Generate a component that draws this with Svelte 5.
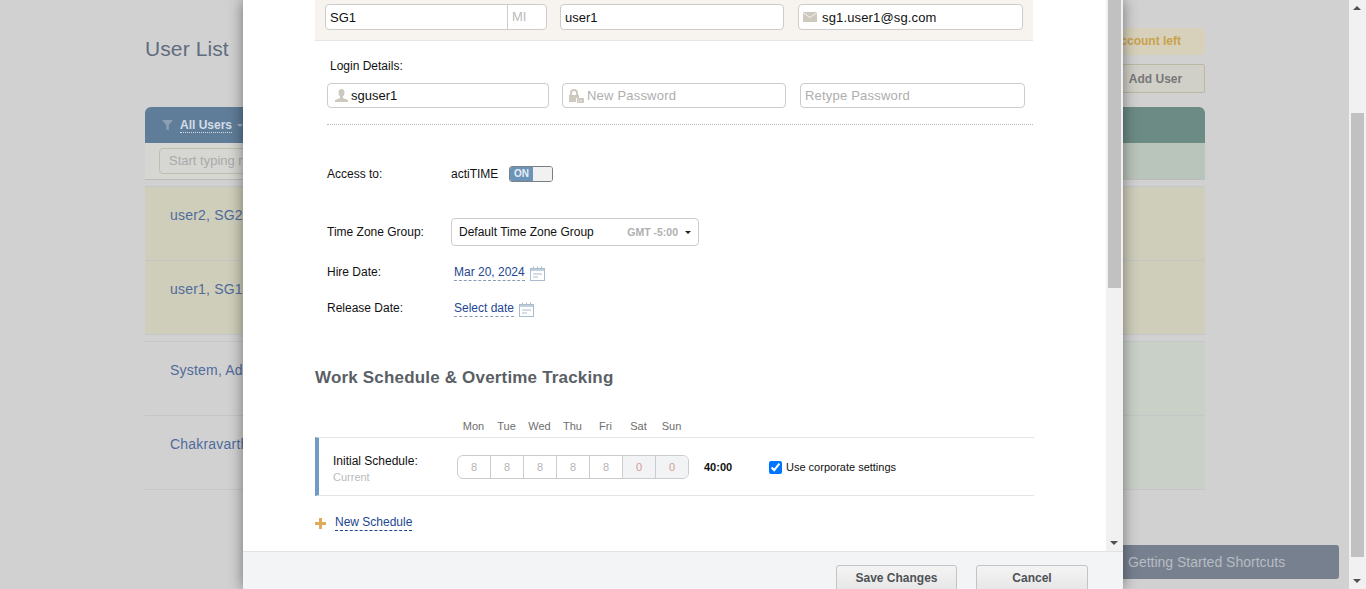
<script>
  const days = ['Mon', 'Tue', 'Wed', 'Thu', 'Fri', 'Sat', 'Sun'];
  const hours = [8, 8, 8, 8, 8, 0, 0];
  const users = [
    { name: 'user2, SG2', tone: 'new' },
    { name: 'user1, SG1', tone: 'new' },
    { name: 'System, Administrator', tone: 'old', gap: true },
    { name: 'Chakravarthi, Rao', tone: 'old' }
  ];
</script>

<div class="screen">
  <div class="page">
    <div class="title-row">
      <h1>User List</h1>
      <div class="title-actions">
        <div class="account-left">1 user account left</div>
        <button class="add-user">Add User</button>
      </div>
    </div>

    <div class="list-head">
      <svg class="funnel" width="11" height="11" viewBox="0 0 11 11"><path d="M0 0h11L6.800 5v5.500L4.200 9V5z" fill="#8d9fb1" /></svg>
      <span class="all-users">All Users</span>
      <span class="all-caret"></span>
    </div>
    <div class="list-filter">
      <div class="filter-input">Start typing name</div>
    </div>

    {#each users as user}
      <div class="user-row {user.tone}" class:gap={user.gap}>{user.name}</div>
    {/each}

    <div class="shortcuts">Getting Started Shortcuts</div>
  </div>

  <div class="page-scroll">
    <span class="arrow up"></span>
    <div class="page-thumb"></div>
    <span class="arrow down"></span>
  </div>

  <div class="modal">
    <div class="modal-main">
      <div class="modal-content">
        <div class="name-band">
          <div class="field first-name">
            <input value="SG1" />
            <span class="mi">MI</span>
          </div>
          <div class="field last-name"><input value="user1" /></div>
          <div class="field email">
            <svg width="14" height="10" viewBox="0 0 14 10"><rect width="14" height="10" fill="#cdc9bf" /><path d="M0 0.500l7 5 7-5" fill="none" stroke="#f4f3ef" /></svg>
            <input value="sg1.user1@sg.com" />
          </div>
        </div>

        <div class="login-label">Login Details:</div>
        <div class="login-row">
          <div class="field login">
            <svg width="13" height="13" viewBox="0 0 13 13"><path d="M6.500 0C8.500 0 9.500 1.500 9.500 3.500S8.600 7 8 7.500V9l5 2v2H0v-2l5-2V7.500C4.400 7 3.500 5.500 3.500 3.500S4.500 0 6.500 0z" fill="#cdc9bf" /></svg>
            <input value="sguser1" />
          </div>
          <div class="field password">
            <svg width="16" height="14" viewBox="0 0 16 14"><path d="M2 6V4a4 4 0 0 1 8 0v2h1v3H8v4H1V6zM4 6h4V4a2 2 0 0 0-4 0z" fill="#cdc9bf" /><rect x="9" y="9" width="7" height="5" rx="1" fill="#cdc9bf" /><path d="M10.500 12h1M12.500 12h1" stroke="#fff" /></svg>
            <input placeholder="New Password" />
          </div>
          <div class="field retype"><input placeholder="Retype Password" /></div>
        </div>

        <div class="access-row">
          <div class="label">Access to:</div>
          <span class="product">actiTIME</span>
          <div class="toggle"><span class="toggle-on">ON</span><span class="toggle-off"></span></div>
        </div>

        <div class="zone-row">
          <div class="label">Time Zone Group:</div>
          <div class="zone-select">
            <span class="zone-name">Default Time Zone Group</span>
            <span class="zone-gmt">GMT -5:00</span>
            <span class="zone-caret"></span>
          </div>
        </div>

        <div class="date-row hire">
          <div class="label">Hire Date:</div>
          <span class="date-link">Mar 20, 2024</span>
          {@render calendar()}
        </div>
        <div class="date-row release">
          <div class="label">Release Date:</div>
          <span class="date-link">Select date</span>
          {@render calendar()}
        </div>

        <h2>Work Schedule &amp; Overtime Tracking</h2>

        <div class="days">
          {#each days as day}
            <span>{day}</span>
          {/each}
        </div>

        <div class="schedule">
          <div class="schedule-name">
            <div>Initial Schedule:</div>
            <div class="current">Current</div>
          </div>
          <div class="hours">
            {#each hours as h}
              <span class:off={h === 0}>{h}</span>
            {/each}
          </div>
          <div class="total">40:00</div>
          <label class="corporate">
            <input type="checkbox" checked />
            Use corporate settings
          </label>
        </div>

        <div class="new-schedule">
          <svg width="11" height="11" viewBox="0 0 11 11"><path d="M4 0h3v4h4v3H7v4H4V7H0V4h4z" fill="#e0a95c" /></svg>
          <span>New Schedule</span>
        </div>
      </div>

      <div class="modal-scroll">
        <div class="modal-thumb"></div>
        <span class="arrow down"></span>
      </div>
    </div>

    <div class="modal-foot">
      <button class="foot-btn save">Save Changes</button>
      <button class="foot-btn cancel">Cancel</button>
    </div>
  </div>
</div>

{#snippet calendar()}
  <svg class="cal" width="15" height="15" viewBox="0 0 15 15">
    <rect x="0.500" y="2.500" width="14" height="12" fill="#fff" stroke="#a9bccd" />
    <path d="M1 3h13v2H1z" fill="#c3d1dd" />
    <path d="M3.500 0.500v3M7.500 0.500v3M11.500 0.500v3" stroke="#a9bccd" />
    <path d="M3 7h9v2H3zM3 10h5v2H3z" fill="#d5dee6" />
  </svg>
{/snippet}

<style>
  :global(body) {
    margin: 0;
    overflow: hidden;
    font-family: "Liberation Sans", Arial, sans-serif;
  }

  .screen {
    position: relative;
    display: flex;
    height: 589px;
    overflow: hidden;
    background: #d1d1d1;
  }

  .page {
    flex: 1;
    padding: 28px 144px 0 145px;
    min-width: 0;
  }

  .title-row {
    display: flex;
    justify-content: space-between;
    height: 79px;
  }

  h1 {
    margin: 9px 0 0;
    font-size: 21px;
    font-weight: normal;
    line-height: 24px;
    letter-spacing: 0.1px;
    color: #616c80;
  }

  .title-actions {
    display: flex;
    flex-direction: column;
    align-items: flex-end;
    gap: 9px;
  }

  .account-left {
    height: 27px;
    line-height: 27px;
    padding: 0 24px;
    border-radius: 5px;
    background: #d7d1bb;
    color: #c9a24b;
    font-size: 12px;
    font-weight: bold;
  }

  .add-user {
    box-sizing: border-box;
    width: 99px;
    height: 29px;
    padding: 0;
    border: 1px solid #bdb8a0;
    border-radius: 2px;
    background: #d1d0c8;
    color: #77777a;
    font: bold 12px "Liberation Sans", Arial, sans-serif;
  }

  .list-head {
    display: flex;
    align-items: center;
    height: 36px;
    padding-left: 17px;
    border-radius: 6px 6px 0 0;
    background: linear-gradient(90deg, #5f7d99 0, #5f7d99 40%, #6c8b85 60%, #6c8b85 100%);
  }

  .all-users {
    margin-left: 7px;
    font-size: 12px;
    font-weight: bold;
    color: #d3dde6;
    border-bottom: 1px dotted #d3dde6;
  }

  .all-caret {
    margin-left: 5px;
    border: 3px solid transparent;
    border-top-color: #a9b8c6;
    border-bottom: 0;
  }

  .list-filter {
    box-sizing: border-box;
    height: 37px;
    padding: 5px 14px;
    border-bottom: 1px solid #bcbcb8;
    background: linear-gradient(90deg, #d6d6d3 0, #d6d6d3 40%, #b9c4ba 60%, #b9c4ba 100%);
  }

  .filter-input {
    box-sizing: border-box;
    width: 200px;
    height: 26px;
    padding-left: 9px;
    line-height: 24px;
    border: 1px solid #c1bfac;
    border-radius: 4px;
    font-size: 13px;
    color: #aaaaaa;
  }

  .user-row {
    box-sizing: border-box;
    height: 74.500px;
    padding: 20px 25px 0;
    font-size: 14px;
    line-height: 17px;
    letter-spacing: 0.2px;
    color: #4f6b9b;
    border-bottom: 1px solid #c6c6c8;
  }

  .user-row.new {
    background: #cfcebb;
  }

  .list-filter + .user-row {
    margin-top: 6px;
    border-top: 1px solid #c6c6c8;
  }

  .user-row.old {
    background: linear-gradient(90deg, #d1d1d1 0, #d1d1d1 40%, #c8d0c8 60%, #c8d0c8 100%);
  }

  .user-row.gap {
    margin-top: 6px;
    border-top: 1px solid #c6c6c8;
  }

  .shortcuts {
    position: absolute;
    top: 545px;
    left: 1090px;
    box-sizing: border-box;
    width: 249px;
    height: 34px;
    padding-left: 38px;
    line-height: 34px;
    border-radius: 3px;
    background: #77808f;
    color: #b8bcc3;
    font-size: 14px;
  }

  .page-scroll {
    position: relative;
    width: 17px;
    background: #f1f1f1;
  }

  .page-thumb {
    position: absolute;
    top: 113px;
    left: 2px;
    width: 13px;
    height: 444px;
    background: #c1c1c1;
  }

  .arrow {
    position: absolute;
    left: 4px;
    border: 4px solid transparent;
    border-left-width: 4.500px;
    border-right-width: 4.500px;
  }

  .arrow.up {
    top: 6px;
    border-top: 0;
    border-bottom-color: #505050;
  }

  .arrow.down {
    bottom: 6px;
    border-bottom: 0;
    border-top-color: #505050;
  }

  .modal {
    position: absolute;
    top: 0;
    left: 243px;
    display: flex;
    flex-direction: column;
    width: 880px;
    height: 589px;
    background: #fff;
    box-shadow: 0 0 14px rgba(0, 0, 0, 0.45);
    font-size: 12px;
    color: #111;
  }

  .modal-main {
    display: flex;
    flex: 1;
    min-height: 0;
  }

  .modal-content {
    flex: 1;
    padding-left: 72px;
    min-width: 0;
  }

  .modal-scroll {
    position: relative;
    width: 17px;
    background: #f1f1f1;
  }

  .modal-thumb {
    position: absolute;
    top: 0;
    left: 2px;
    width: 13px;
    height: 288px;
    background: #c1c1c1;
  }

  .field {
    box-sizing: border-box;
    display: flex;
    align-items: center;
    border: 1px solid #cccccc;
    border-radius: 4px;
    background: #fff;
  }

  .field input {
    flex: 1;
    min-width: 0;
    padding: 0;
    border: 0;
    outline: 0;
    background: none;
    font: 13px "Liberation Sans", Arial, sans-serif;
    color: #111;
  }

  .field input::placeholder {
    color: #aeaeae;
    letter-spacing: 0.2px;
  }

  .name-band {
    box-sizing: border-box;
    display: flex;
    width: 718px;
    height: 41px;
    padding: 4px 0 0 10px;
    background: #f7f4ef;
    border-bottom: 1px solid #e6e6e4;
  }

  .name-band .field {
    height: 26px;
    padding-left: 4px;
  }

  .first-name {
    width: 222px;
    margin-right: 13px;
  }

  .mi {
    align-self: stretch;
    width: 39px;
    padding-left: 4px;
    line-height: 24px;
    border-left: 1px solid #cccccc;
    color: #bbbbbb;
    font-size: 13px;
    box-sizing: border-box;
  }

  .last-name {
    width: 224px;
    margin-right: 14px;
  }

  .email {
    width: 225px;
    gap: 5px;
  }

  .email input {
    letter-spacing: 0.15px;
  }

  .login-label {
    margin: 18px 0 0 15px;
    line-height: 14px;
  }

  .login-row {
    display: flex;
    width: 706px;
    height: 41px;
    margin: 10px 0 0 12px;
    border-bottom: 1px dotted #b9b9b9;
  }

  .login-row .field {
    height: 25px;
  }

  .login {
    width: 222px;
    margin-right: 13px;
    padding-left: 7px;
    gap: 3px;
  }

  .password {
    width: 224px;
    margin-right: 14px;
    padding-left: 5px;
    gap: 3px;
  }

  .retype {
    width: 225px;
    padding-left: 4px;
  }

  .label {
    width: 124px;
    flex: none;
  }

  .access-row {
    display: flex;
    align-items: center;
    height: 16px;
    margin: 41px 0 0 12px;
  }

  .product {
    width: 58px;
    font-size: 12px;
  }

  .toggle {
    box-sizing: border-box;
    display: flex;
    width: 44px;
    height: 16px;
    border: 1px solid #7a7f85;
    border-radius: 3px;
    overflow: hidden;
  }

  .toggle-on {
    width: 23px;
    line-height: 14px;
    text-align: center;
    background: #6c94b8;
    color: #e6edf3;
    font-size: 10px;
    font-weight: bold;
  }

  .toggle-off {
    flex: 1;
    background: #f1f1f1;
  }

  .zone-row {
    display: flex;
    align-items: center;
    margin: 36px 0 0 12px;
  }

  .zone-select {
    box-sizing: border-box;
    display: flex;
    align-items: center;
    width: 248px;
    height: 28px;
    padding: 0 7px 0 7px;
    border: 1px solid #cccccc;
    border-radius: 4px;
  }

  .zone-name {
    flex: 1;
  }

  .zone-gmt {
    font-size: 10.500px;
    font-weight: bold;
    color: #b0b0b0;
  }

  .zone-caret {
    margin-left: 7px;
    border: 3px solid transparent;
    border-top-color: #222;
    border-bottom: 0;
  }

  .date-row {
    display: flex;
    align-items: center;
    margin-left: 12px;
  }

  .date-row.hire {
    height: 20px;
    margin-top: 17px;
  }

  .date-row.release {
    height: 20px;
    margin-top: 16px;
  }

  .date-row .label {
    margin-right: 3px;
    margin-top: -3px;
  }

  .date-link {
    color: #23478f;
    border-bottom: 1px dashed #8a9ab3;
    line-height: 14px;
    padding-bottom: 1px;
  }

  .cal {
    margin-left: 5px;
  }

  h2 {
    margin: 49px 0 0;
    font-size: 17px;
    line-height: 20px;
    letter-spacing: 0.18px;
    color: #5a5f66;
  }

  .days {
    display: flex;
    margin: 31px 0 0 142px;
    height: 14px;
    font-size: 11px;
    line-height: 14px;
    color: #6e6e6e;
  }

  .days span {
    width: 33px;
    text-align: center;
  }

  .schedule {
    box-sizing: border-box;
    display: flex;
    align-items: center;
    width: 719px;
    height: 59px;
    margin-top: 4px;
    padding-left: 14px;
    border-top: 1px solid #e4e4e4;
    border-bottom: 1px solid #e4e4e4;
    border-left: 4px solid #6f9bc6;
    font-size: 12px;
  }

  .schedule-name {
    width: 124px;
    margin-top: 5px;
    line-height: 16px;
  }

  .current {
    font-size: 11px;
    color: #bbbbbb;
  }

  .hours {
    box-sizing: border-box;
    display: flex;
    height: 24px;
    border: 1px solid #cccccc;
    border-radius: 6px;
    overflow: hidden;
  }

  .hours span {
    width: 33px;
    line-height: 22px;
    text-align: center;
    font-size: 11px;
    color: #b5b5b5;
    border-left: 1px solid #cccccc;
    box-sizing: border-box;
  }

  .hours span:first-child {
    width: 32px;
    border-left: 0;
  }

  .hours span.off {
    background: #f1f3f5;
    color: #d59a94;
  }

  .total {
    width: 65px;
    margin-left: 15px;
    font-size: 11px;
    font-weight: bold;
  }

  .corporate {
    display: flex;
    align-items: center;
    margin-top: 1px;
    gap: 4px;
    font-size: 11px;
  }

  .corporate input {
    width: 13px;
    height: 13px;
    margin: 1px 0 0;
    accent-color: #0075ff;
  }

  .new-schedule {
    display: flex;
    align-items: center;
    gap: 9px;
    margin-top: 19px;
  }

  .new-schedule span {
    color: #23478f;
    border-bottom: 1px dashed #23478f;
    line-height: 14px;
    padding-bottom: 1px;
  }

  .modal-foot {
    box-sizing: border-box;
    display: flex;
    justify-content: flex-end;
    gap: 19px;
    height: 38px;
    padding: 13px 35px 0 0;
    background: #f3f4f5;
    border-top: 1px solid #e2e2e2;
    overflow: hidden;
  }

  .foot-btn {
    box-sizing: border-box;
    height: 34px;
    padding: 0 0 8px;
    border: 1px solid #c4c4c4;
    border-radius: 3px 3px 0 0;
    background: linear-gradient(#f4f4f4, #e2e2e2);
    color: #4e5257;
    font: bold 12px "Liberation Sans", Arial, sans-serif;
  }

  .save {
    width: 121px;
  }

  .cancel {
    width: 112px;
  }
</style>
